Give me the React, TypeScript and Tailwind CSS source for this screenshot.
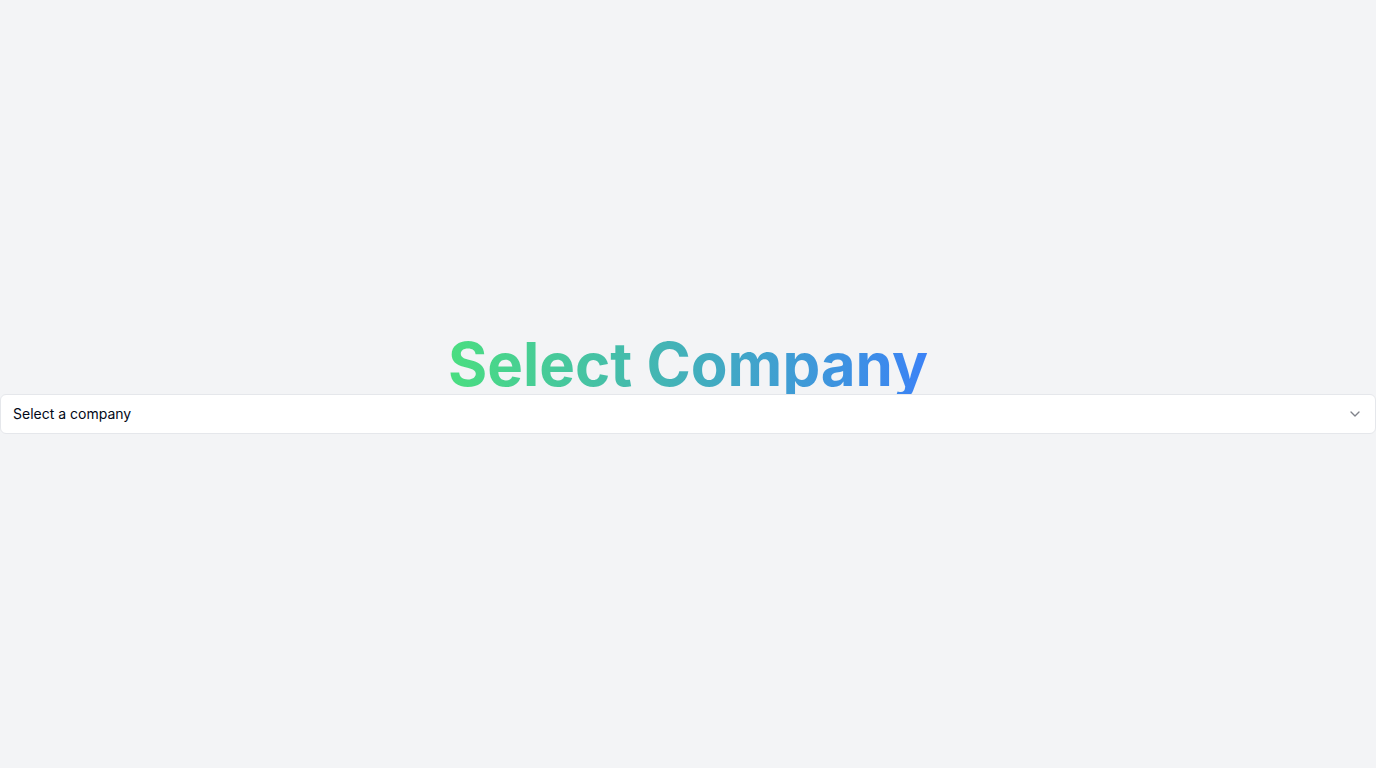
import React from "react";
import { ChevronDown } from "lucide-react";

export default function App() {
    return (
        <div className="min-h-screen w-full bg-[#f3f4f6] flex flex-col justify-center items-center font-['Inter',sans-serif]">
            <h1 className="text-6xl leading-none font-bold text-transparent bg-clip-text bg-linear-to-r/srgb from-[#4ade80] to-[#3b82f6]">
                Select Company
            </h1>
            <button
                type="button"
                className="relative w-full h-10 flex items-center justify-between rounded-md border border-[#e5e7eb] bg-white px-3 text-sm text-[#020817]"
            >
                <span>Select a company</span>
                <ChevronDown className="h-4 w-4 opacity-50" />
            </button>
        </div>
    );
}
